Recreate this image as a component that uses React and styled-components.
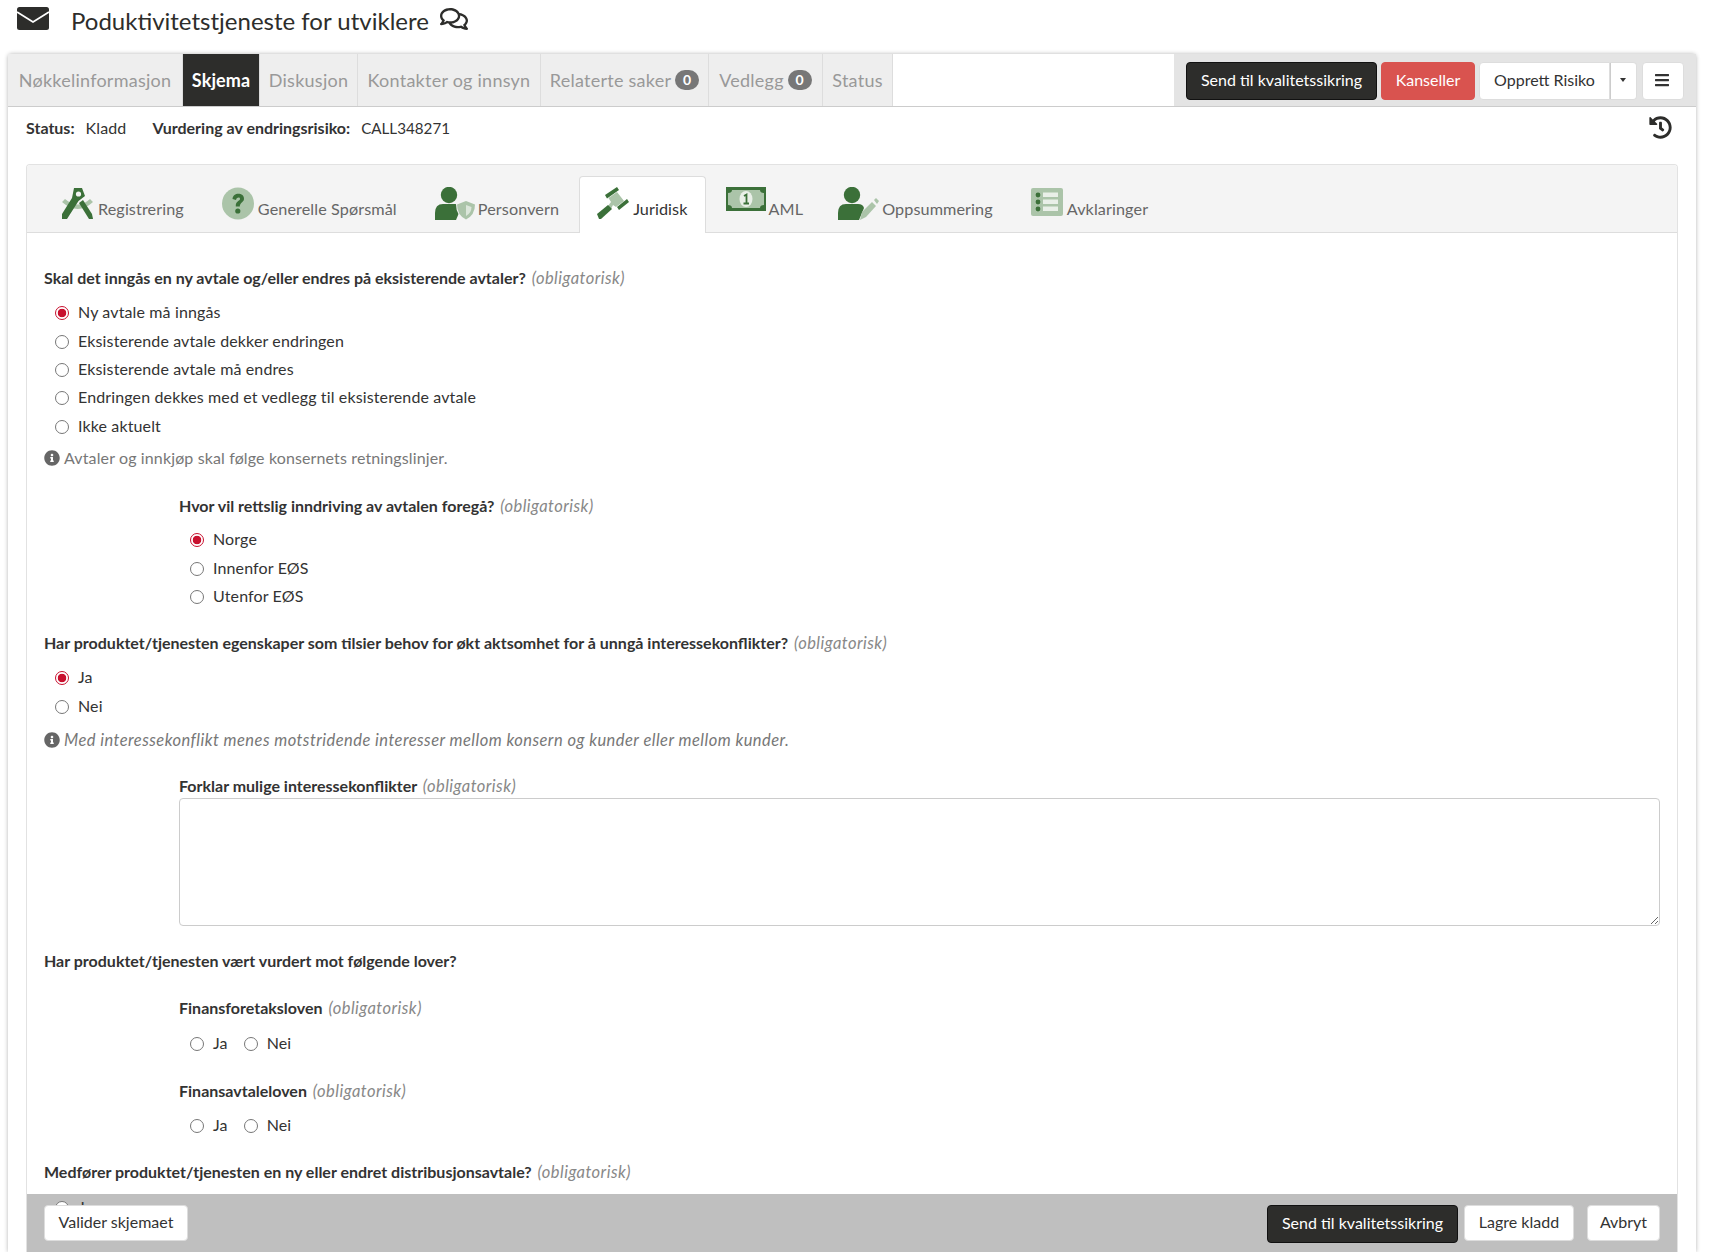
import React from "react";
import styled, { createGlobalStyle } from "styled-components";
import { FaRegComments, FaHistory, FaInfoCircle, FaBars } from "react-icons/fa";

const DARK = "#3b7039";
const LIGHT = "#abc4a9";

const GlobalStyle = createGlobalStyle`
  html, body {
    margin: 0;
    height: 100%;
    overflow: hidden;
    background: #fff;
    color: #333;
    font-family: Lato, "Open Sans", sans-serif;
    font-size: 16px;
    line-height: 20px;
    letter-spacing: 0.13px;
  }
  * { box-sizing: border-box; }
`;

const Page = styled.div`
  height: 1252px;
  overflow: hidden;
  display: flex;
  flex-direction: column;
`;

const Header = styled.header`
  height: 54px;
  flex: none;
  display: flex;
  align-items: flex-start;
  padding: 7px 0 0 17px;
`;

const Title = styled.h1`
  margin: 0 0 0 22px;
  font-size: 24px;
  line-height: 28px;
  font-weight: 400;
  letter-spacing: 0;
  color: #2d2d2b;
`;

const TitleIcon = styled(FaRegComments)`
  margin: -2px 0 0 11px;
  font-size: 28px;
  color: #2d2d2b;
`;

const Card = styled.main`
  flex: 1;
  min-height: 0;
  margin: 0 19px 0 8px;
  display: flex;
  flex-direction: column;
  border-radius: 4px 4px 0 0;
  box-shadow: 0 0 4px rgba(0, 0, 0, 0.3);
  background: #fff;
`;

const TopBar = styled.nav`
  height: 53px;
  flex: none;
  display: flex;
  border-bottom: 1px solid #ccc;
`;

const NavTab = styled.div`
  width: ${(p) => p.$width}px;
  display: flex;
  align-items: center;
  justify-content: center;
  gap: 4px;
  font-size: 18px;
  letter-spacing: ${(p) => (p.$active ? 0.1 : 0.25)}px;
  color: ${(p) => (p.$active ? "#fff" : "#999")};
  background: ${(p) => (p.$active ? "#2d2d2b" : "#eee")};
  border-right: 1px solid #ddd;
  font-weight: ${(p) => (p.$active ? 700 : 400)};
`;

const Badge = styled.span`
  width: 24px;
  height: 20px;
  border-radius: 10px;
  background: #777;
  color: #fff;
  font-size: 14px;
  font-weight: 700;
  text-align: center;
`;

const ActionArea = styled.div`
  margin-left: auto;
  width: 522px;
  padding: 8px 12px 0;
  display: flex;
  align-items: flex-start;
  background: #e4e4e4;
`;

const Button = styled.button`
  height: ${(p) => p.$height || 38}px;
  width: ${(p) => p.$width}px;
  margin-left: ${(p) => p.$gap || 0}px;
  padding: 0 0 2px;
  font: 400 16px/20px Lato, sans-serif;
  border-radius: 4px;
  border: 1px solid ${(p) => (p.$kind === "dark" ? "#111" : p.$kind === "danger" ? "#d9534f" : "#ddd")};
  color: ${(p) => (p.$kind ? "#fff" : "#333")};
  background: ${(p) => (p.$kind === "dark" ? "#2d2d2b" : p.$kind === "danger" ? "#d9534f" : "#fff")};
  flex: none;
  position: relative;
  z-index: 2;
`;

const SplitWrap = styled.div`
  display: flex;
  margin-left: 4px;
`;

const SplitMain = styled(Button)`
  border-radius: 4px 0 0 4px;
`;

const SplitCaret = styled(Button)`
  border-radius: 0 4px 4px 0;
  border-left: 0;
  box-shadow: inset 1px 0 0 #ccc;
  display: flex;
  align-items: center;
  justify-content: center;
  &::after {
    content: "";
    border-top: 4px solid #333;
    border-left: 3.5px solid transparent;
    border-right: 3.5px solid transparent;
  }
`;

const MenuButton = styled(Button)`
  display: flex;
  align-items: center;
  justify-content: center;
  font-size: 16px;
  padding-right: 2px;
`;

const StatusRow = styled.div`
  height: 57px;
  flex: none;
  padding: 11px 18px 0 18px;
  display: flex;
  align-items: flex-start;
`;

const StatusLabel = styled.b`
  margin-right: 11px;
  letter-spacing: 0;
`;

const StatusValue = styled.span`
  margin-right: 26px;
`;

const CallNumber = styled.span`
  font-size: 15.2px;
  letter-spacing: 0;
`;

const HistoryIcon = styled(FaHistory)`
  margin: -2px 6px 0 auto;
  font-size: 23px;
  color: #2d2d2b;
`;

const Panel = styled.section`
  flex: 1;
  min-height: 0;
  margin: 0 18px;
  position: relative;
  overflow: hidden;
  border: 1px solid #e2e2e2;
  border-bottom: 0;
  border-radius: 4px 4px 0 0;
`;

const SubTabs = styled.div`
  height: 68px;
  padding: 11px 0 0 17px;
  display: flex;
  gap: 2px;
  background: #f4f4f4;
  border-bottom: 1px solid #ddd;
`;

const SubTab = styled.div`
  height: 57px;
  padding: 10px ${(p) => p.$padRight ?? 17}px 0 17px;
  display: flex;
  align-items: flex-start;
  gap: ${(p) => p.$gap ?? 4}px;
  font-size: 16.2px;
  letter-spacing: 0.1px;
  color: ${(p) => (p.$active ? "#333" : "#666")};
  background: ${(p) => (p.$active ? "#fff" : "transparent")};
  border: 1px solid ${(p) => (p.$active ? "#ddd" : "transparent")};
  border-bottom: 0;
  border-radius: 4px 4px 0 0;
`;

const SubTabText = styled.span`
  margin-top: 12px;
`;

const Form = styled.div`
  padding: 35px 17px 0;
`;

const Question = styled.div`
  margin-top: ${(p) => p.$top || 0}px;
  margin-left: ${(p) => (p.$sub ? 135 : 0)}px;
  font-weight: 700;
  line-height: 20px;
  letter-spacing: 0;
`;

const Required = styled.i`
  margin-left: 2px;
  font-size: 16.5px;
  font-weight: 400;
  letter-spacing: 0.45px;
  color: #888;
`;

const Options = styled.div`
  margin-top: ${(p) => p.$top ?? 10}px;
  margin-left: ${(p) => (p.$sub ? 135 : 0)}px;
  display: flex;
  flex-direction: ${(p) => (p.$inline ? "row" : "column")};
  position: relative;
  z-index: 1;
`;

const OptionLabel = styled.label`
  height: 28.4px;
  padding-left: 11px;
  display: flex;
  align-items: center;
  gap: 9px;
  margin-right: ${(p) => (p.$inline ? 5 : 0)}px;
`;

const Radio = styled.input.attrs({ type: "radio", readOnly: true })`
  appearance: none;
  flex: none;
  margin: 2px 0 0;
  width: 14px;
  height: 14px;
  border-radius: 50%;
  border: 1px solid #777;
  background: #fff;
  &:checked {
    border-color: #c8102e;
    background: radial-gradient(circle, #c8102e 0 4px, #fff 4.6px);
  }
`;

const Help = styled.div`
  margin-top: ${(p) => p.$top ?? 10}px;
  display: flex;
  align-items: center;
  gap: 4px;
  color: #777;
  font-style: ${(p) => (p.$italic ? "italic" : "normal")};
  font-size: ${(p) => (p.$italic ? 16.5 : 16)}px;
  letter-spacing: ${(p) => (p.$italic ? 0.45 : 0.13)}px;
`;

const InfoIcon = styled(FaInfoCircle)`
  flex: none;
  font-size: 16px;
  color: #666;
`;

const TextArea = styled.textarea`
  display: block;
  margin: 2px 0 0 135px;
  width: calc(100% - 135px);
  height: 128px;
  border: 1px solid #ccc;
  border-radius: 4px;
  outline: 0;
`;

const Footer = styled.footer`
  position: absolute;
  left: 0;
  right: 0;
  bottom: 0;
  height: 58px;
  padding: 11px 17px 0;
  display: flex;
  align-items: flex-start;
  background: #bfbfbf;
`;

const FooterRight = styled.div`
  margin-left: auto;
  display: flex;
  align-items: flex-start;
`;

const MailIcon = () => (
  <svg width="32" height="23" viewBox="0 0 32 23">
    <rect width="32" height="23" rx="2.5" fill="#2d2d2b" />
    <path d="M0 5 L16 15 L32 5" fill="none" stroke="#fff" strokeWidth="1.8" />
  </svg>
);

const CompassIcon = () => (
  <svg width="32" height="33" viewBox="0 0 32 33">
    <path d="M0 15 L3 12 Q16 23 28 12 L31 15 Q16 29 0 15 Z" fill={LIGHT} />
    <path d="M12 1 H20 L23 9 L16.5 14 L5 32 H0 V27 L10 11 Z" fill={DARK} />
    <path d="M21 13 L30 27 L31 32 H27 L17 16 Z" fill={DARK} />
    <circle cx="16.5" cy="7" r="2.6" fill="#f4f4f4" />
  </svg>
);

const QuestionIcon = () => (
  <svg width="32" height="33" viewBox="0 0 32 33">
    <circle cx="16" cy="16.5" r="16" fill={LIGHT} />
    <path d="M10.5 12 C11 4.5 22.5 5.5 22 12 C21.8 15.5 17.8 15.5 17.8 19.5 H13.8 C13.4 13.8 18 14.2 18 12 C18 10 14.8 10 14 13 Z" fill={DARK} />
    <circle cx="15.8" cy="24" r="2.6" fill={DARK} />
  </svg>
);

const Person = () => (
  <>
    <circle cx="14" cy="8" r="8.2" fill={DARK} />
    <path d="M0 33 V26 Q0 17 8 17 H20 Q25 17 26 21 L21 33 Z" fill={DARK} />
  </>
);

const ShieldPersonIcon = () => (
  <svg width="41" height="33" viewBox="0 0 41 33">
    <Person />
    <path d="M31 13 L41 17 Q41 29 31 33 Q21 29 21 17 Z" fill="#f4f4f4" />
    <path d="M31 14 L40 17.5 Q40 28 31 32.5 Q22 28 22 17.5 Z" fill={LIGHT} />
    <path d="M31 18 L36.5 20 Q36.5 26 31 29 Z" fill="#dbe6da" />
  </svg>
);

const GavelIcon = () => (
  <svg width="32" height="33" viewBox="0 0 32 33">
    <path d="M11 19 L14 15 L11.5 11 L20 5 L27 14 L19 20 L16 18 L14 22 Z" fill={LIGHT} />
    <path d="M0 27 L11 18 L15 22 L4 32 H2 Z" fill={DARK} />
    <path d="M8 8 L20 0 L22 3 L10 11.5 Z" fill={DARK} />
    <path d="M20 20 L30 12 L32 15 L22 23 Z" fill={DARK} />
  </svg>
);

const MoneyIcon = () => (
  <svg width="40" height="29" viewBox="0 0 40 29">
    <rect width="40" height="24" fill={DARK} />
    <path d="M6 3 H34 Q34 6 38 6 V18 Q34 18 34 21 H6 Q6 18 2 18 V6 Q6 6 6 3 Z" fill={LIGHT} />
    <ellipse cx="20" cy="12" rx="6.5" ry="8" fill="#e9efe8" />
    <path d="M18 9 L20.5 7.5 V16 M17.5 16.5 H23" fill="none" stroke={DARK} strokeWidth="1.8" />
  </svg>
);

const PenPersonIcon = () => (
  <svg width="41" height="33" viewBox="0 0 41 33">
    <Person />
    <path d="M22 33 L24 25 L34 15 L38 19 L28 30 Z" fill={LIGHT} />
    <path d="M36 13 L38 11 L41 14 L39 17 Z" fill={LIGHT} />
  </svg>
);

const ListIcon = () => (
  <svg width="32" height="33" viewBox="0 0 32 33">
    <rect y="1" width="32" height="28" rx="2" fill={LIGHT} />
    <circle cx="7" cy="8" r="2.4" fill={DARK} />
    <circle cx="7" cy="15" r="2.4" fill={DARK} />
    <circle cx="7" cy="22" r="2.4" fill={DARK} />
    <rect x="12" y="5.5" width="15" height="4.5" fill="#e9efe8" />
    <rect x="12" y="12.5" width="15" height="4.5" fill="#e9efe8" />
    <rect x="12" y="19.5" width="15" height="4.5" fill="#e9efe8" />
  </svg>
);

const navTabs = [
  { label: "Nøkkelinformasjon", width: 175 },
  { label: "Skjema", width: 77, active: true },
  { label: "Diskusjon", width: 98 },
  { label: "Kontakter og innsyn", width: 183 },
  { label: "Relaterte saker", width: 168, badge: 0 },
  { label: "Vedlegg", width: 114, badge: 0 },
  { label: "Status", width: 70 },
];

const subTabs = [
  { label: "Registrering", icon: <CompassIcon /> },
  { label: "Generelle Spørsmål", icon: <QuestionIcon /> },
  { label: "Personvern", icon: <ShieldPersonIcon />, gap: 2 },
  { label: "Juridisk", icon: <GavelIcon />, active: true },
  { label: "AML", icon: <MoneyIcon />, gap: 3, padRight: 14 },
  { label: "Oppsummering", icon: <PenPersonIcon />, gap: 3 },
  { label: "Avklaringer", icon: <ListIcon /> },
];

function RadioGroup({ options, checked, sub, inline, top, name }) {
  return (
    <Options $sub={sub} $inline={inline} $top={top}>
      {options.map((o) => (
        <OptionLabel key={o} $inline={inline}>
          <Radio name={name} defaultChecked={o === checked} />
          {o}
        </OptionLabel>
      ))}
    </Options>
  );
}

export default function App() {
  return (
    <Page>
      <GlobalStyle />
      <Header>
        <MailIcon />
        <Title>Poduktivitetstjeneste for utviklere</Title>
        <TitleIcon />
      </Header>
      <Card>
        <TopBar>
          {navTabs.map((t) => (
            <NavTab key={t.label} $active={t.active} $width={t.width}>
              {t.label}
              {t.badge !== undefined && <Badge>{t.badge}</Badge>}
            </NavTab>
          ))}
          <ActionArea>
            <Button $kind="dark" $width={191}>Send til kvalitetssikring</Button>
            <Button $kind="danger" $width={94} $gap={4}>Kanseller</Button>
            <SplitWrap>
              <SplitMain $width={131}>Opprett Risiko</SplitMain>
              <SplitCaret $width={27} aria-label="Mer" />
            </SplitWrap>
            <MenuButton $width={42} $gap={5} aria-label="Meny"><FaBars /></MenuButton>
          </ActionArea>
        </TopBar>
        <StatusRow>
          <StatusLabel>Status:</StatusLabel>
          <StatusValue>Kladd</StatusValue>
          <StatusLabel>Vurdering av endringsrisiko:</StatusLabel>
          <CallNumber>CALL348271</CallNumber>
          <HistoryIcon />
        </StatusRow>
        <Panel>
          <SubTabs>
            {subTabs.map((t) => (
              <SubTab key={t.label} $active={t.active} $gap={t.gap} $padRight={t.padRight}>
                {t.icon}
                <SubTabText>{t.label}</SubTabText>
              </SubTab>
            ))}
          </SubTabs>
          <Form>
            <Question>Skal det inngås en ny avtale og/eller endres på eksisterende avtaler? <Required>(obligatorisk)</Required></Question>
            <RadioGroup
              name="avtale"
              checked="Ny avtale må inngås"
              options={[
                "Ny avtale må inngås",
                "Eksisterende avtale dekker endringen",
                "Eksisterende avtale må endres",
                "Endringen dekkes med et vedlegg til eksisterende avtale",
                "Ikke aktuelt",
              ]}
            />
            <Help $top={8}><InfoIcon />Avtaler og innkjøp skal følge konsernets retningslinjer.</Help>
            <Question $sub $top={28}>Hvor vil rettslig inndriving av avtalen foregå? <Required>(obligatorisk)</Required></Question>
            <RadioGroup name="inndriving" sub top={9} checked="Norge" options={["Norge", "Innenfor EØS", "Utenfor EØS"]} />
            <Question $top={23}>Har produktet/tjenesten egenskaper som tilsier behov for økt aktsomhet for å unngå interessekonflikter? <Required>(obligatorisk)</Required></Question>
            <RadioGroup name="konflikt" checked="Ja" options={["Ja", "Nei"]} />
            <Help $italic><InfoIcon />Med interessekonflikt menes motstridende interesser mellom konsern og kunder eller mellom kunder.</Help>
            <Question $sub $top={26}>Forklar mulige interessekonflikter <Required>(obligatorisk)</Required></Question>
            <TextArea />
            <Question $top={25}>Har produktet/tjenesten vært vurdert mot følgende lover?</Question>
            <Question $sub $top={27}>Finansforetaksloven <Required>(obligatorisk)</Required></Question>
            <RadioGroup name="foretak" sub inline top={11} options={["Ja", "Nei"]} />
            <Question $sub $top={23.6}>Finansavtaleloven <Required>(obligatorisk)</Required></Question>
            <RadioGroup name="avtaleloven" sub inline options={["Ja", "Nei"]} />
            <Question $top={22.6}>Medfører produktet/tjenesten en ny eller endret distribusjonsavtale? <Required>(obligatorisk)</Required></Question>
            <RadioGroup name="distribusjon" top={11.4} options={["Ja"]} />
          </Form>
          <Footer>
            <Button $width={144} $height={36}>Valider skjemaet</Button>
            <FooterRight>
              <Button $kind="dark" $width={191}>Send til kvalitetssikring</Button>
              <Button $width={110} $height={36} $gap={6}>Lagre kladd</Button>
              <Button $width={73} $height={36} $gap={13}>Avbryt</Button>
            </FooterRight>
          </Footer>
        </Panel>
      </Card>
    </Page>
  );
}
